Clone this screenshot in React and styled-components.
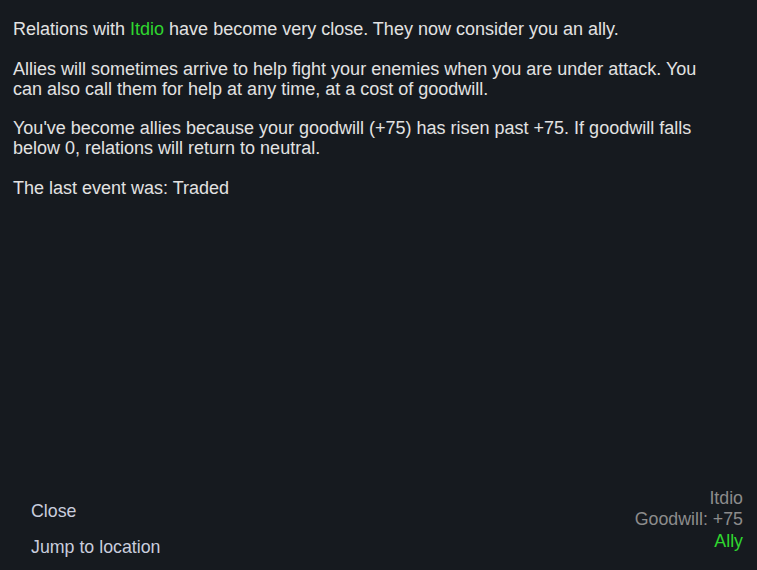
import React from 'react';
import styled, { createGlobalStyle } from 'styled-components';

const Global = createGlobalStyle`
  html, body {
    margin: 0;
    padding: 0;
    background: #161a1f;
  }
  body {
    font-family: "Liberation Sans", Arial, sans-serif;
  }
`;

const Dialog = styled.div`
  width: 757px;
  height: 570px;
  box-sizing: border-box;
  background: #161a1f;
  display: flex;
  flex-direction: column;
  justify-content: space-between;
  padding: 19px 14px 8px 13px;
`;

const Body = styled.div`
  color: #e2e2e2;
  font-size: 18px;
  line-height: 20px;
  p {
    margin: 0 0 19.7px 0;
    max-width: 700px;
  }
`;

const Faction = styled.span`
  color: #2fd62f;
`;

const Footer = styled.div`
  display: flex;
  justify-content: space-between;
  align-items: flex-end;
`;

const Actions = styled.div`
  display: flex;
  flex-direction: column;
  gap: 16px;
  padding: 0 0 5px 18px;
`;

const Action = styled.button`
  background: none;
  border: none;
  padding: 0;
  text-align: left;
  font-family: inherit;
  font-size: 17.8px;
  line-height: 20px;
  color: #c9cddd;
  cursor: pointer;
  &:hover {
    color: #ffffff;
  }
`;

const Summary = styled.div`
  display: flex;
  flex-direction: column;
  align-items: flex-end;
  padding-bottom: 10px;
  font-size: 17.8px;
  line-height: 21.5px;
  color: #8c8c8c;
`;

const Status = styled.span`
  color: ${p => p.$color || '#8c8c8c'};
`;

export default function App() {
  return (
    <>
      <Global />
      <Dialog>
        <Body>
          <p>Relations with <Faction>Itdio</Faction> have become very close. They now consider you an ally.</p>
          <p>Allies will sometimes arrive to help fight your enemies when you are under attack. You can also call them for help at any time, at a cost of goodwill.</p>
          <p>You've become allies because your goodwill (+75) has risen past +75. If goodwill falls below 0, relations will return to neutral.</p>
          <p>The last event was: Traded</p>
        </Body>
        <Footer>
          <Actions>
            <Action>Close</Action>
            <Action>Jump to location</Action>
          </Actions>
          <Summary>
            <Status>Itdio</Status>
            <Status>Goodwill: +75</Status>
            <Status $color="#2fd62f">Ally</Status>
          </Summary>
        </Footer>
      </Dialog>
    </>
  );
}
